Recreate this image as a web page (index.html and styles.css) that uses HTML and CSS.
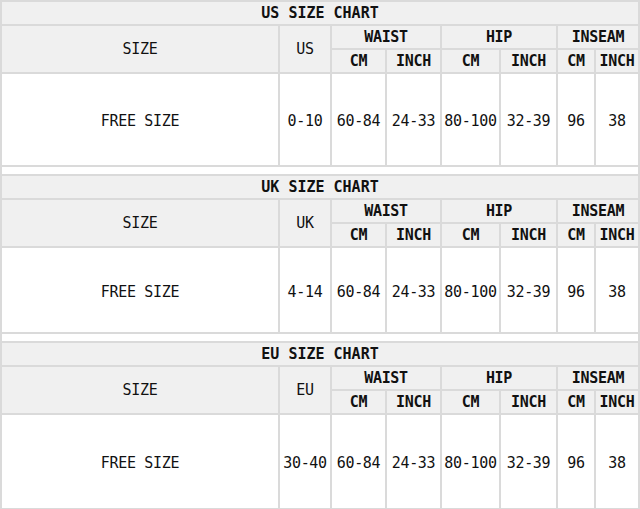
FILE: index.html
```html
<!DOCTYPE html>
<html>
<head>
<meta charset="utf-8">
<link rel="stylesheet" href="styles.css">
</head>
<body>
<table class="chart">
  <colgroup>
    <col class="c-size"><col class="c-reg"><col class="c-wcm"><col class="c-win"><col class="c-hcm"><col class="c-hin"><col class="c-icm"><col class="c-iin">
  </colgroup>
  <tbody>
    <tr class="r-title"><th colspan="8" class="title">US SIZE CHART</th></tr>
    <tr class="r-head"><th rowspan="2" class="plain">SIZE</th><th rowspan="2" class="plain">US</th><th colspan="2">WAIST</th><th colspan="2">HIP</th><th colspan="2">INSEAM</th></tr>
    <tr class="r-head"><th>CM</th><th>INCH</th><th>CM</th><th>INCH</th><th>CM</th><th>INCH</th></tr>
    <tr class="r-data1"><td>FREE SIZE</td><td>0-10</td><td>60-84</td><td>24-33</td><td>80-100</td><td>32-39</td><td>96</td><td>38</td></tr>
    <tr class="r-gap"><td colspan="8"></td></tr>
  </tbody>
  <tbody>
    <tr class="r-title"><th colspan="8" class="title">UK SIZE CHART</th></tr>
    <tr class="r-head"><th rowspan="2" class="plain">SIZE</th><th rowspan="2" class="plain">UK</th><th colspan="2">WAIST</th><th colspan="2">HIP</th><th colspan="2">INSEAM</th></tr>
    <tr class="r-head"><th>CM</th><th>INCH</th><th>CM</th><th>INCH</th><th>CM</th><th>INCH</th></tr>
    <tr class="r-data2"><td>FREE SIZE</td><td>4-14</td><td>60-84</td><td>24-33</td><td>80-100</td><td>32-39</td><td>96</td><td>38</td></tr>
    <tr class="r-gap"><td colspan="8"></td></tr>
  </tbody>
  <tbody>
    <tr class="r-title"><th colspan="8" class="title">EU SIZE CHART</th></tr>
    <tr class="r-head"><th rowspan="2" class="plain">SIZE</th><th rowspan="2" class="plain">EU</th><th colspan="2">WAIST</th><th colspan="2">HIP</th><th colspan="2">INSEAM</th></tr>
    <tr class="r-head"><th>CM</th><th>INCH</th><th>CM</th><th>INCH</th><th>CM</th><th>INCH</th></tr>
    <tr class="r-data3"><td>FREE SIZE</td><td>30-40</td><td>60-84</td><td>24-33</td><td>80-100</td><td>32-39</td><td>96</td><td>38</td></tr>
  </tbody>
</table>
</body>
</html>
```

FILE: styles.css
```css
html, body {
  margin: 0;
  padding: 0;
  background: #ffffff;
}

.chart {
  width: 640px;
  border-collapse: collapse;
  table-layout: fixed;
  font-family: "DejaVu Sans Mono", "Liberation Mono", monospace;
  font-size: 15px;
  color: #111111;
}

.c-size { width: 278px; }
.c-reg { width: 52px; }
.c-wcm { width: 55px; }
.c-win { width: 55px; }
.c-hcm { width: 59px; }
.c-hin { width: 57px; }
.c-icm { width: 38px; }
.c-iin { width: 44px; }

.chart th,
.chart td {
  border: 2px solid #dadada;
  padding: 0;
  text-align: center;
  vertical-align: middle;
  letter-spacing: -0.3px;
  white-space: nowrap;
  overflow: hidden;
}

.chart td {
  padding-top: 3px;
}

.chart th {
  background: #f0f0f0;
  font-weight: bold;
}

.chart th.plain {
  font-weight: normal;
}

.chart th.title {
  letter-spacing: 0;
}

.r-title, .r-head { height: 24px; }
.r-data1 { height: 93px; }
.r-data2 { height: 86px; }
.r-data3 { height: 95px; }
.r-gap { height: 9px; }

.chart .r-gap td {
  background: #ffffff;
  padding: 0;
}
```
